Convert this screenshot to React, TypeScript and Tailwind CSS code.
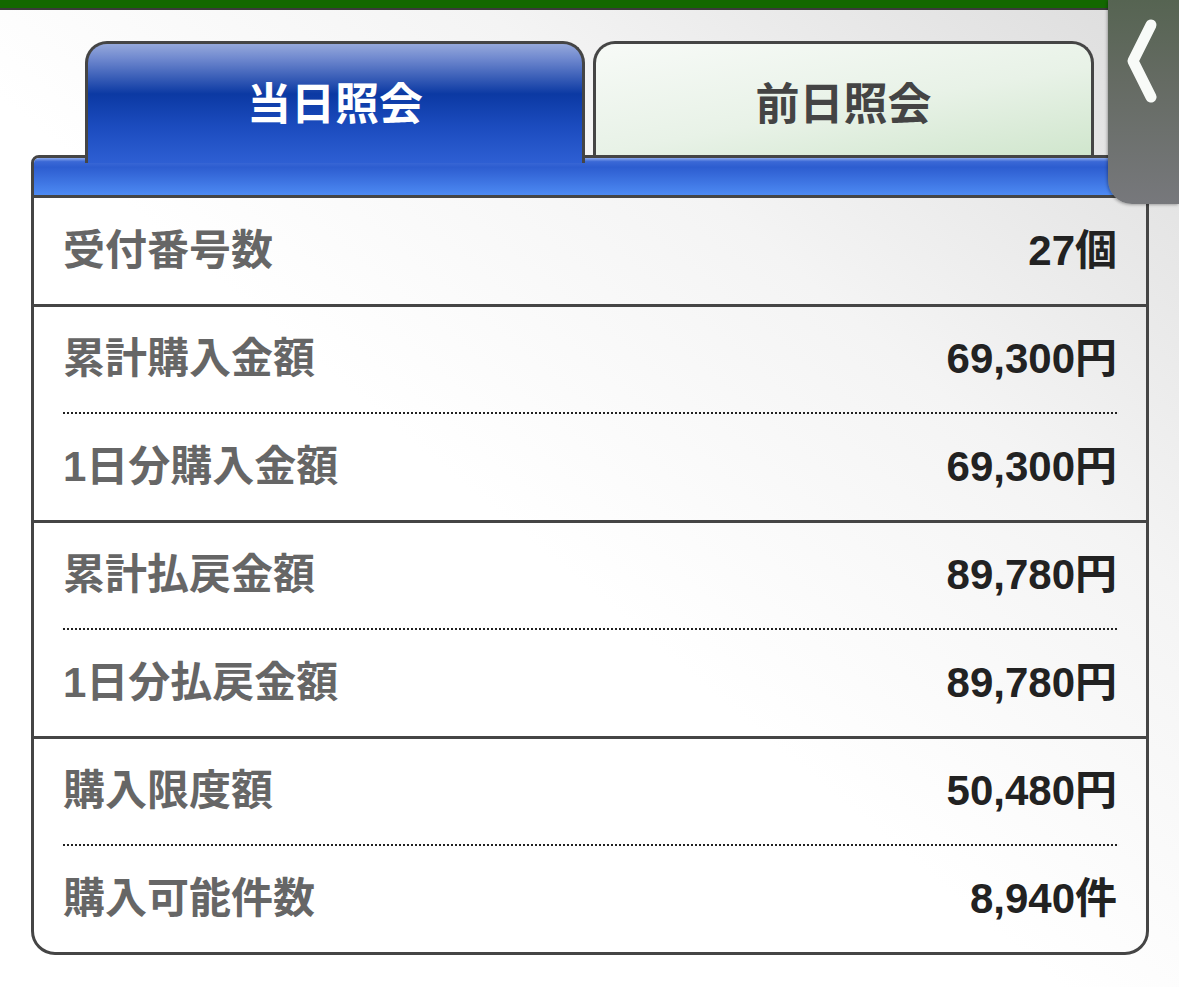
import React from "react";

type Row = { label: string; value: string };

const sections: Row[][] = [
  [{ label: "受付番号数", value: "27個" }],
  [
    { label: "累計購入金額", value: "69,300円" },
    { label: "1日分購入金額", value: "69,300円" },
  ],
  [
    { label: "累計払戻金額", value: "89,780円" },
    { label: "1日分払戻金額", value: "89,780円" },
  ],
  [
    { label: "購入限度額", value: "50,480円" },
    { label: "購入可能件数", value: "8,940件" },
  ],
];

const jp = "font-['Liberation_Sans','Noto_Sans_CJK_JP',sans-serif]";

function BackHandle() {
  return (
    <div className="absolute top-0 right-0 z-20 w-[71px] h-[204px] rounded-bl-[24px] bg-[linear-gradient(180deg,#566452_0%,#656b63_40%,#77787c_100%)] shadow-[-1px_1px_3px_rgba(0,0,0,0.3)]">
      <svg width="71" height="120" viewBox="0 0 71 120" className="block">
        <polyline
          points="43,25 25,61 43,97"
          fill="none"
          stroke="#f8fbf8"
          strokeWidth="11"
          strokeLinecap="round"
          strokeLinejoin="round"
        />
      </svg>
    </div>
  );
}

function Tabs() {
  return (
    <div className="flex h-[114px] pl-[54px] gap-[8px]">
      <div className="relative z-10 w-[500px] h-[122px] -mb-[8px] shrink-0 rounded-t-[22px] border-[3px] border-b-0 border-[#454545] bg-[linear-gradient(180deg,#95a8db_0%,#7089cf_12%,#0b39a3_42%,#1c4cbf_70%,#2e5fd3_100%)] flex justify-center pt-[39px]">
        <span className={`${jp} text-[44px] leading-none font-bold text-white`}>
          当日照会
        </span>
      </div>
      <div className="w-[501px] h-[114px] shrink-0 rounded-t-[22px] border-[3px] border-b-0 border-[#454545] bg-[linear-gradient(170deg,#f7faf7_0%,#e8f2e7_55%,#d0e6cd_100%)] flex justify-center pt-[39px]">
        <span className={`${jp} text-[44px] leading-none font-bold text-[#444]`}>
          前日照会
        </span>
      </div>
    </div>
  );
}

function InfoRow({ row, dotted }: { row: Row; dotted: boolean }) {
  return (
    <div
      className={`flex h-[105.5px] items-center justify-between box-content ${
        dotted ? "border-t-2 border-dotted border-[#222]" : ""
      }`}
    >
      <span className={`${jp} text-[42px] leading-none font-bold text-[#666]`}>
        {row.label}
      </span>
      <span className={`${jp} text-[42px] leading-none font-bold text-[#222]`}>
        {row.value}
      </span>
    </div>
  );
}

export default function App() {
  return (
    <div className="relative w-full min-h-screen overflow-hidden bg-[linear-gradient(to_bottom_left,#dcdcdc_0%,#f4f4f4_30%,#ffffff_55%)]">
      <div className="h-[10px] bg-[#136800] border-b-2 border-[#3a3a3a]" />
      <BackHandle />
      <div className="pl-[31px] pt-[31px] w-[1149px]">
        <Tabs />
        <div className="border-[3px] border-[#454545] rounded-tl-[8px] rounded-b-[24px] overflow-hidden">
          <div className="h-[40px] border-b-[3px] border-[#454545] bg-[linear-gradient(180deg,#8aa8ec_0%,#3a68d6_10%,#2d5dd0_25%,#4d8af3_100%)]" />
          {sections.map((rows, i) => (
            <div
              key={i}
              className={`px-[29px] ${i > 0 ? "border-t-[3px] border-[#454545]" : ""}`}
            >
              {rows.map((row, j) => (
                <InfoRow key={row.label} row={row} dotted={j > 0} />
              ))}
            </div>
          ))}
        </div>
      </div>
    </div>
  );
}
